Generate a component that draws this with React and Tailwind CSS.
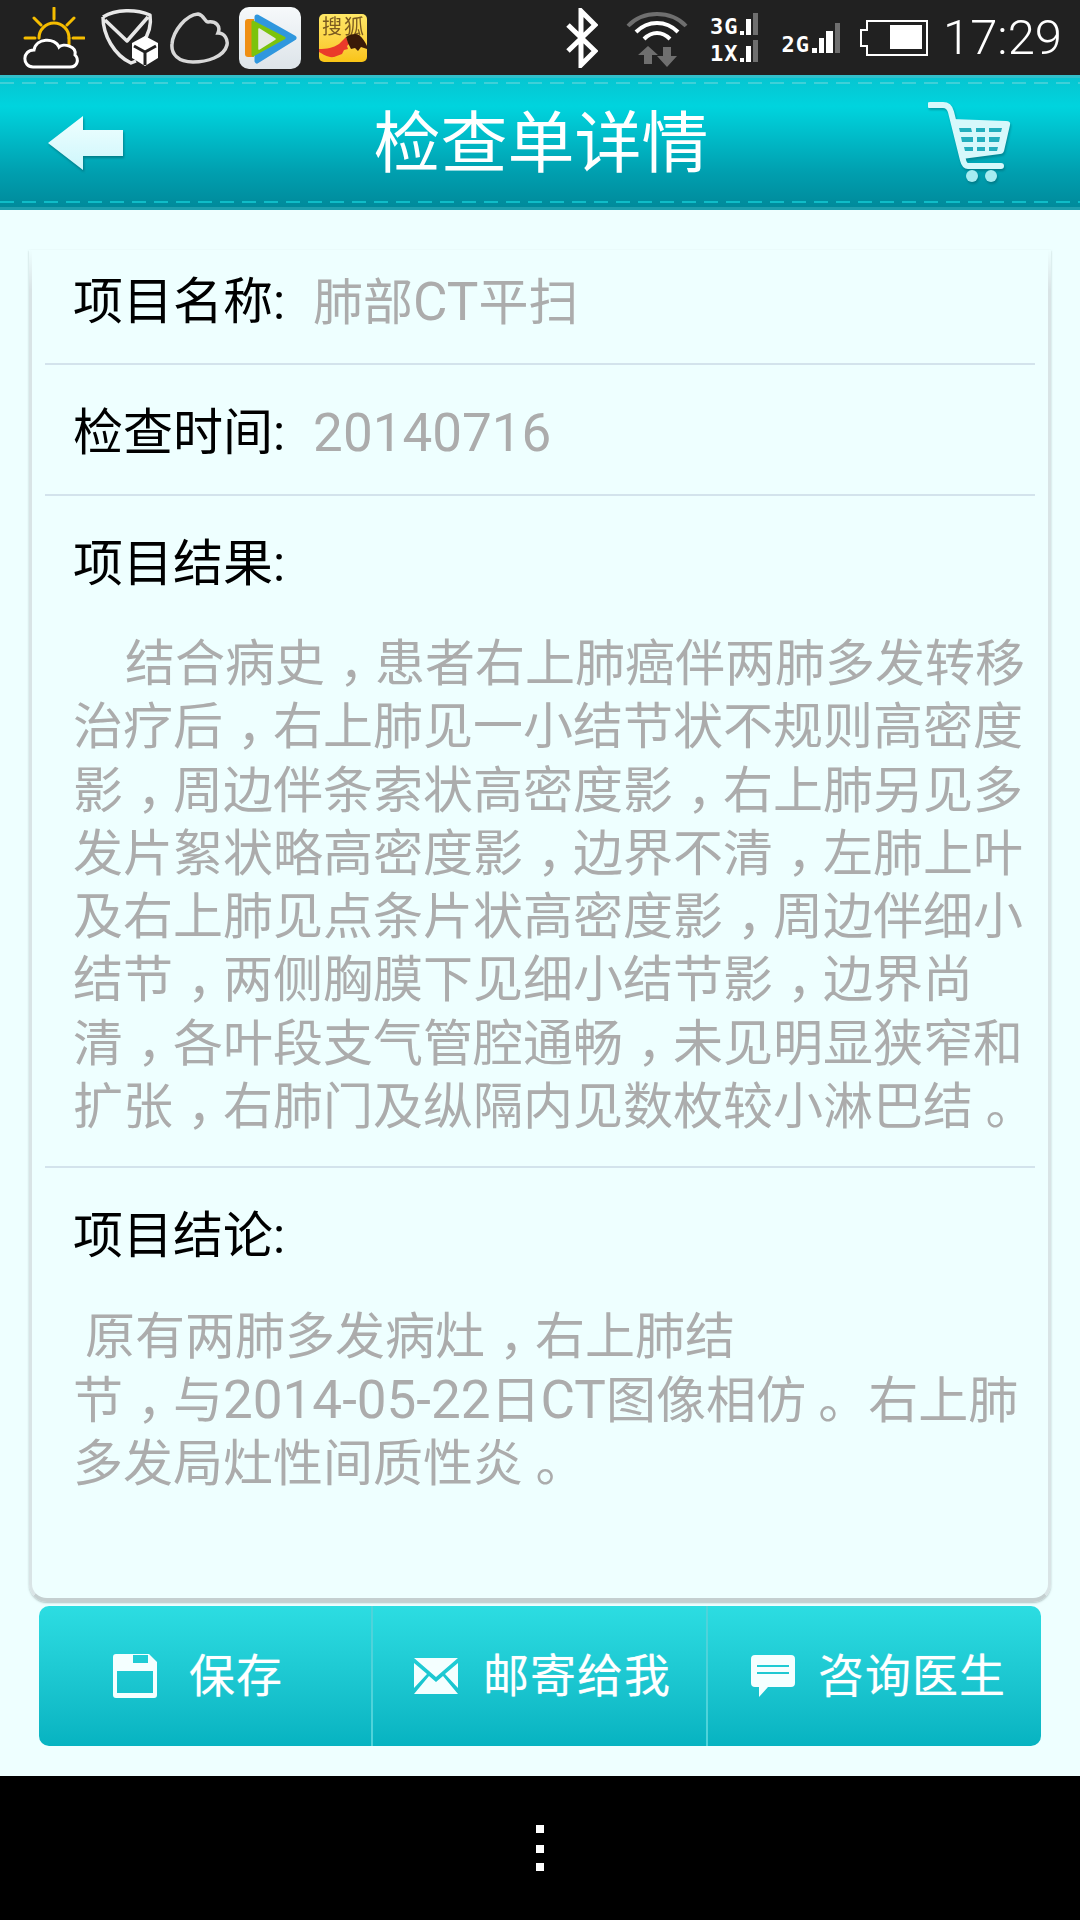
import React from 'react';

const SANS = "font-['Roboto','Noto_Sans_CJK_SC',sans-serif]";

const resultLines = [
    '治疗后，右上肺见一小结节状不规则高密度',
    '影，周边伴条索状高密度影，右上肺另见多',
    '发片絮状略高密度影，边界不清，左肺上叶',
    '及右上肺见点条片状高密度影，周边伴细小',
    '结节，两侧胸膜下见细小结节影，边界尚',
    '清，各叶段支气管腔通畅，未见明显狭窄和',
    '扩张，右肺门及纵隔内见数枚较小淋巴结 。',
];

const conclusionLines = [
    '节，与2014-05-22日CT图像相仿 。右上肺',
    '多发局灶性间质性炎 。',
];

// latin runs sit a bit larger than the cjk, and commas are centred in their cell
const Rich = ({ text }) => (
    <>
        {text.split(/([A-Za-z0-9-]+|，)/).map((part, i) => {
            if (part === '，') return <span key={i} className="inline-block w-[36px] ml-[14px] tracking-[-14px]">，</span>;
            if (/^[A-Za-z0-9-]+$/.test(part)) return <span key={i} className="text-[53px]">{part}</span>;
            return <span key={i}>{part}</span>;
        })}
    </>
);

const SunCloud = () => (
    <svg width="62" height="62" viewBox="0 0 62 62" fill="none" strokeLinecap="round">
        <g stroke="#f5bd00" strokeWidth="3">
            <path d="M31 1v11M11 11l7 7M51 11l-7 7M2 31h10M50 31h11" />
            <path d="M16 31a15 15 0 0 1 30 0" />
            <path d="M46 31v8" />
        </g>
        <path d="M10 60c-11 0-11-17 1-17 2-12 21-13 25-3 4-4 18-1 16 8 4 4 3 12-5 12z" fill="#212121" stroke="#fff" strokeWidth="3" />
    </svg>
);

const ShieldBox = () => (
    <svg width="58" height="60" viewBox="0 0 58 60" fill="none">
        <path d="M2 9C15 1 35 1 49 7c2 12-3 22-8 29M2 9c0 18 11 38 28 46l5-2M4 12l22 21L47 9" stroke="#e8e8e8" strokeWidth="3.5" strokeLinejoin="round" />
        <path d="M44 28l13 7v15l-13 8-13-8V35z" fill="#fff" />
        <path d="M33 38l11 6 11-6M44 44v13" stroke="#212121" strokeWidth="3" />
    </svg>
);

const CloudOutline = () => (
    <svg width="60" height="52" viewBox="0 0 60 52" fill="none">
        <path d="M28 2c6 1 7 8 10 8 8-1 13 4 10 11 7 0 10 7 9 12-3 12-20 17-34 17C8 50 1 42 2 32 3 19 16 3 28 2z" stroke="#d8d8d8" strokeWidth="3.5" />
    </svg>
);

const TencentVideo = () => (
    <div className="w-[62px] h-[62px] rounded-[10px] bg-gradient-to-b from-[#f6f9fb] to-[#dde4e9] blur-[0.4px]">
        <svg width="62" height="62" viewBox="0 0 62 62" strokeLinejoin="round">
            <path d="M6 15q0-3 3-3h6v38H9q-3 0-3-3z" fill="#ef8f14" />
            <path d="M18 10l37 21-37 23z" fill="#2f97de" stroke="#2f97de" strokeWidth="5" />
            <path d="M14 15l31 16-31 17z" fill="#7cc30d" stroke="#7cc30d" strokeWidth="3" />
            <path d="M20 22l16 10-16 10z" fill="#e8eae6" stroke="#e8eae6" strokeWidth="1.5" />
        </svg>
    </div>
);

const SohuIcon = () => (
    <div className={`relative w-[48px] h-[48px] rounded-[5px] overflow-hidden bg-gradient-to-b from-[#ffe866] to-[#f9c414] ${SANS}`}>
        <div className="text-[20px] leading-[20px] text-[#7a5a20] flex justify-center gap-[2px] mt-[3px] blur-[0.4px]">
            <span>搜</span><span>狐</span>
        </div>
        <svg className="absolute left-0 top-0 blur-[0.3px]" width="48" height="48" viewBox="0 0 48 48">
            <path d="M0 35c8 0 14-1 20-5l7-7 2 5 2 1-3 3 1 3-4 1-2 4-8 3c-6 1-11-3-15-5z" fill="#ea3a2a" />
            <path d="M27 23c4-3 10-4 13-2 4 3 6 7 8 11v3l-6-2-3 4-3-3-4 1-3-6z" fill="#3a1a08" />
        </svg>
    </div>
);

const Bluetooth = () => (
    <svg width="32" height="60" viewBox="0 0 32 60" fill="none">
        <path d="M2 17l27 26-14 14V3l14 14L2 43" stroke="#fff" strokeWidth="5" />
    </svg>
);

const Wifi = () => (
    <svg width="62" height="60" viewBox="0 0 62 60" fill="none">
        <path d="M2 18C17 2 45 2 60 18" stroke="#6f6f6f" strokeWidth="4" />
        <path d="M10 24c12-12 30-12 42 0" stroke="#fff" strokeWidth="4" />
        <path d="M18 31c8-8 18-8 26 0" stroke="#fff" strokeWidth="4" />
        <path d="M12 47l10-9 10 9h-6v9h-8v-9zM31 48h6v-9h8v9h6l-10 11z" fill="#6f6f6f" />
    </svg>
);

const NetRow = ({ label, bars }) => (
    <div className="flex items-end">
        <span className="font-['DejaVu_Sans_Mono',monospace] font-bold text-[22px] leading-[16px] tracking-[1px] text-white">{label}</span>
        <div className="flex items-end gap-[2px] ml-[2px]">
            {bars.map((bar, i) => (
                <div key={i} className={bar.dim ? 'bg-[#6f6f6f]' : 'bg-white'} style={{ width: bar.w, height: bar.h }} />
            ))}
        </div>
    </div>
);

const Battery = () => (
    <svg width="68" height="36" viewBox="0 0 68 36" fill="none">
        <path d="M7 1h60v34H7v-9H1V10h6z" stroke="#fff" strokeWidth="2" />
        <rect x="30" y="5" width="32" height="24" fill="#fff" />
    </svg>
);

const smallBars = [{ w: 4, h: 4 }, { w: 5, h: 16 }, { w: 5, h: 22, dim: true }];
const bigBars = [{ w: 5, h: 5 }, { w: 5, h: 15 }, { w: 7, h: 22 }, { w: 5, h: 30, dim: true }];

const StatusBar = () => (
    <div className="h-[75px] bg-[#212121] flex items-center shrink-0">
        <div className="flex items-center pl-[23px]">
            <SunCloud />
            <div className="ml-[16px]"><ShieldBox /></div>
            <div className="ml-[11px]"><CloudOutline /></div>
            <div className="ml-[9px]"><TencentVideo /></div>
            <div className="ml-[18px]"><SohuIcon /></div>
        </div>
        <div className="flex items-center ml-auto pr-[18px]">
            <Bluetooth />
            <div className="ml-[28px]"><Wifi /></div>
            <div className="ml-[22px] flex flex-col gap-[5px]">
                <NetRow label="3G" bars={smallBars} />
                <NetRow label="1X" bars={smallBars} />
            </div>
            <div className="ml-[23px]">
                <NetRow label="2G" bars={bigBars} />
            </div>
            <div className="ml-[20px]"><Battery /></div>
            <div className="ml-[15px] font-['Roboto',sans-serif] font-light text-[49px] leading-none text-white">17:29</div>
        </div>
    </div>
);

const BackArrow = () => (
    <svg className="drop-shadow-[1px_2px_1px_rgba(0,80,90,0.5)]" width="76" height="54" viewBox="0 0 76 54">
        <defs>
            <linearGradient id="arrow-fill" x1="0" y1="0" x2="0" y2="1">
                <stop offset="0" stopColor="#f0ffff" />
                <stop offset="1" stopColor="#cdf6fb" />
            </linearGradient>
        </defs>
        <path d="M0 27L35 0v14h40v26H35v14z" fill="url(#arrow-fill)" />
    </svg>
);

const Cart = () => (
    <svg className="blur-[0.5px] drop-shadow-[1px_2px_1px_rgba(0,80,90,0.4)]" width="84" height="82" viewBox="0 0 84 82" fill="none">
        <path d="M2 3h13c5 0 7 3 8 7l12 48c1 4 2 6 5 6h33" stroke="#d6f8fb" strokeWidth="6" strokeLinecap="round" />
        <path d="M24 17l54 2q5 0 4 4l-6 26q-1 3-4 3l-38 5z" fill="#d6f8fb" />
        <path d="M31 26h12l1 4H32zM48 26h9v4h-9zM61 26h13l-1 4H61zM33 35h12v5H34zM49 35h8v5h-8zM61 35h11l-1 5H61zM36 45h9v4h-8zM49 45h8v4h-8zM61 45h9l-1 4h-8z" fill="#22aebd" />
        <circle cx="44" cy="74" r="6" fill="#a6ecf1" />
        <circle cx="63" cy="74" r="6" fill="#a6ecf1" />
    </svg>
);

const Header = () => (
    <header className="h-[135px] shrink-0 flex flex-col bg-[linear-gradient(180deg,#07c5d1_0%,#00d4de_22%,#00bcc9_45%,#00a0b0_72%,#008a9b_100%)] border-t-[3px] border-t-[#33c0cb] border-b-[3px] border-b-[#1fa0af]">
        <div className="h-[2px] mt-[4px] bg-[repeating-linear-gradient(90deg,#3fd0d8_0,#3fd0d8_14px,transparent_14px,transparent_22px)]" />
        <div className="flex-1 flex items-center">
            <div className="w-[152px] pl-[48px]"><BackArrow /></div>
            <h1 className={`flex-1 text-center text-[67px] leading-none text-white mt-[4px] pl-[2px] ${SANS}`}>检查单详情</h1>
            <div className="w-[152px] pr-[68px] flex justify-end"><Cart /></div>
        </div>
        <div className="h-[2px] mb-[4px] bg-[repeating-linear-gradient(90deg,#0fbcc8_0,#0fbcc8_14px,transparent_14px,transparent_22px)]" />
    </header>
);

const Para = ({ first, indent, lines }) => (
    <div className="text-[#acacac] text-[50px] leading-[63.3px] whitespace-nowrap">
        <div className={`h-[63.3px] ${indent}`}><Rich text={first} /></div>
        {lines.map((line) => <div key={line} className="h-[63.3px]"><Rich text={line} /></div>)}
    </div>
);

const Divider = () => <div className="h-[2px] mx-[13px] bg-[#d3e3ec]" />;

const Card = () => (
    <div className={`relative mx-[29px] mt-[40px] h-[1352px] rounded-b-[18px] border-x-[3px] border-b-[4px] border-x-[#d9e4e6] border-b-[#c4cfd0] shadow-[0_1px_2px_rgba(120,135,135,0.5)] ${SANS}`}>
        {/* side borders fade in from the top */}
        <div className="absolute left-[-3px] right-[-3px] top-0 h-[40px] bg-gradient-to-b from-[#eeffff] to-transparent" />
        <div className="relative px-[13px] text-[50px]">
            <div className="h-[113px] flex items-center pl-[28px] pb-[8px]">
                <span className="text-black">项目名称:</span>
                <span className="ml-[28px] text-[#acacac] leading-none"><Rich text="肺部CT平扫" /></span>
            </div>
        </div>
        <Divider />
        <div className="relative px-[13px] text-[50px]">
            <div className="h-[129px] flex items-center pl-[28px] pt-[8px]">
                <span className="text-black">检查时间:</span>
                <span className="ml-[28px] text-[#acacac] leading-none"><Rich text="20140716" /></span>
            </div>
        </div>
        <Divider />
        <div className="h-[670px] px-[13px]">
            <div className="pl-[28px]">
                <div className="pt-[38px] text-[50px] leading-[60px] text-black">项目结果:</div>
                <div className="mt-[39px]">
                    <Para first="结合病史，患者右上肺癌伴两肺多发转移" indent="pl-[52px]" lines={resultLines} />
                </div>
            </div>
        </div>
        <Divider />
        <div className="pl-[41px]">
            <div className="pt-[38px] text-[50px] leading-[60px] text-black">项目结论:</div>
            <div className="mt-[40px]">
                <Para first="原有两肺多发病灶，右上肺结" indent="pl-[12px]" lines={conclusionLines} />
            </div>
        </div>
    </div>
);

const ActionBar = () => (
    <div className={`mx-[39px] mt-[4px] h-[140px] rounded-[10px] overflow-hidden flex bg-gradient-to-b from-[#2cdde2] to-[#06b3c1] text-white text-[46px] tracking-[1px] [text-shadow:0_0_1px_rgba(255,255,255,0.5)] ${SANS}`}>
        <div className="w-[334px] flex items-center border-r-2 border-[#4fd3da]">
            <svg className="ml-[74px]" width="44" height="44" viewBox="0 0 44 44">
                <path fillRule="evenodd" fill="#f4ffff" d="M3 0h33l8 8v33a3 3 0 0 1-3 3H3a3 3 0 0 1-3-3V3a3 3 0 0 1 3-3zM4 17v22h36V17zM20 1v8h15V1z" />
            </svg>
            <span className="ml-[32px]">保存</span>
        </div>
        <div className="w-[335px] flex items-center border-r-2 border-[#4fd3da]">
            <svg className="ml-[41px]" width="44" height="36" viewBox="0 0 44 36">
                <path fill="#f4ffff" d="M0 0h44L22 19zM0 5l13 11L0 30zM44 5L31 16l13 14zM15 18l7 6 7-6 15 18H0z" />
            </svg>
            <span className="ml-[25px]">邮寄给我</span>
        </div>
        <div className="flex-1 flex items-center">
            <svg className="ml-[43px]" width="44" height="42" viewBox="0 0 44 42">
                <path fill="#f4ffff" fillRule="evenodd" d="M4 0h36a4 4 0 0 1 4 4v24a4 4 0 0 1-4 4H17l-9 10v-10H4a4 4 0 0 1-4-4V4a4 4 0 0 1 4-4zM6 10v2h32v-2zM6 17v2h32v-2z" />
            </svg>
            <span className="ml-[23px]">咨询医生</span>
        </div>
    </div>
);

const NavBar = () => (
    <div className="h-[144px] bg-black flex items-center justify-center shrink-0">
        <div className="flex flex-col">
            <div className="w-[8px] h-[8px] bg-white" />
            <div className="w-[8px] h-[8px] bg-white mt-[12px]" />
            <div className="w-[8px] h-[8px] bg-white mt-[10px]" />
        </div>
    </div>
);

export default function App() {
    return (
        <div className="w-[1080px] h-[1920px] flex flex-col bg-[#eeffff] overflow-hidden">
            <StatusBar />
            <Header />
            <main className="flex-1 flex flex-col">
                <Card />
                <ActionBar />
            </main>
            <NavBar />
        </div>
    );
}
